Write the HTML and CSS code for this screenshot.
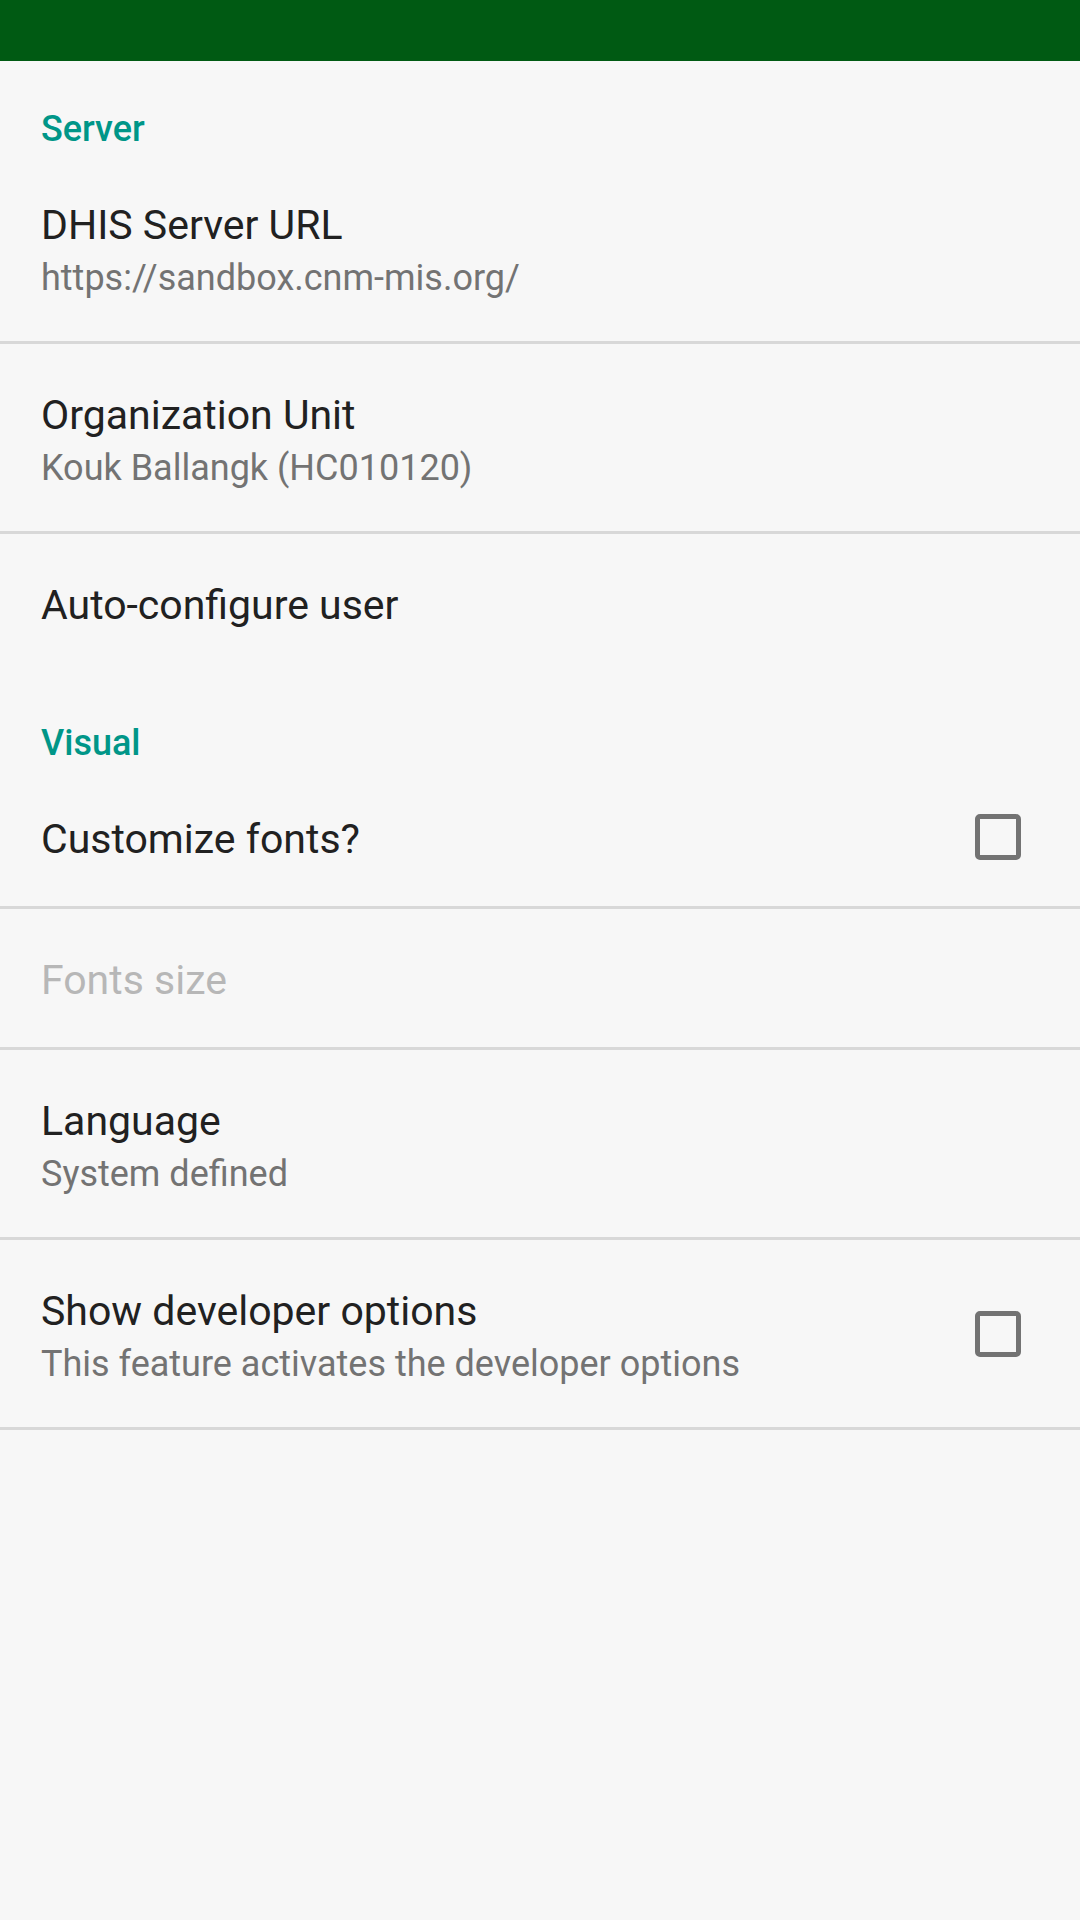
FILE: index.html
```html
<!DOCTYPE html>
<html lang="en">
<head>
<meta charset="utf-8">
<meta name="viewport" content="width=device-width, initial-scale=1">
<title>Settings</title>
<link rel="stylesheet" href="styles.css">
</head>
<body>
<div class="status-bar"></div>
<main class="settings">
  <section>
    <h2 class="category">Server</h2>
    <ul class="list">
      <li class="row"><button class="item" type="button"><span class="text"><span class="title">DHIS Server URL</span><span class="summary">https://sandbox.cnm-mis.org/</span></span></button></li>
      <li class="row"><button class="item" type="button"><span class="text"><span class="title">Organization Unit</span><span class="summary">Kouk Ballangk (HC010120)</span></span></button></li>
      <li class="row row-open"><button class="item" type="button"><span class="text"><span class="title">Auto-configure user</span></span></button></li>
    </ul>
  </section>
  <section>
    <h2 class="category">Visual</h2>
    <ul class="list">
      <li class="row"><label class="item"><span class="text"><span class="title">Customize fonts?</span></span><input class="box" type="checkbox"></label></li>
      <li class="row"><button class="item" type="button" disabled><span class="text"><span class="title">Fonts size</span></span></button></li>
      <li class="row"><button class="item" type="button"><span class="text"><span class="title">Language</span><span class="summary">System defined</span></span></button></li>
      <li class="row"><label class="item"><span class="text"><span class="title">Show developer options</span><span class="summary">This feature activates the developer options</span></span><input class="box" type="checkbox"></label></li>
    </ul>
  </section>
</main>
</body>
</html>
```

FILE: styles.css
```css
* {
  box-sizing: border-box;
}

body {
  margin: 0;
  min-height: 100vh;
  background: #f7f7f7;
  color: #212121;
  font-family: Roboto, "Liberation Sans", sans-serif;
}

.status-bar {
  height: 61px;
  background: #005a13;
}

.category {
  margin: 0;
  padding: 46px 41px 3px;
  color: #009688;
  font-size: 36px;
  font-weight: 500;
  line-height: 44px;
}

.list {
  margin: 0;
  padding: 0;
  list-style: none;
}

.row {
  border-bottom: 3px solid #d8d8d8;
}

.row-open {
  border-bottom-color: transparent;
}

.item {
  display: flex;
  align-items: center;
  justify-content: space-between;
  width: 100%;
  padding: 0 59px 0 41px;
  border: 0;
  background: none;
  color: inherit;
  font: inherit;
  text-align: left;
}

.item:disabled {
  color: #b7b7b7;
}

.text {
  padding: 47px 0 43px;
}

.title {
  display: block;
  font-size: 41px;
  line-height: 48px;
}

.summary {
  display: block;
  margin-top: 9px;
  color: #737373;
  font-size: 36px;
  line-height: 40px;
}

.box {
  flex: none;
  width: 46px;
  height: 46px;
  margin: 0;
  border: 5px solid #737373;
  border-radius: 5px;
  appearance: none;
}

.box:checked {
  background: #009688;
}
```
